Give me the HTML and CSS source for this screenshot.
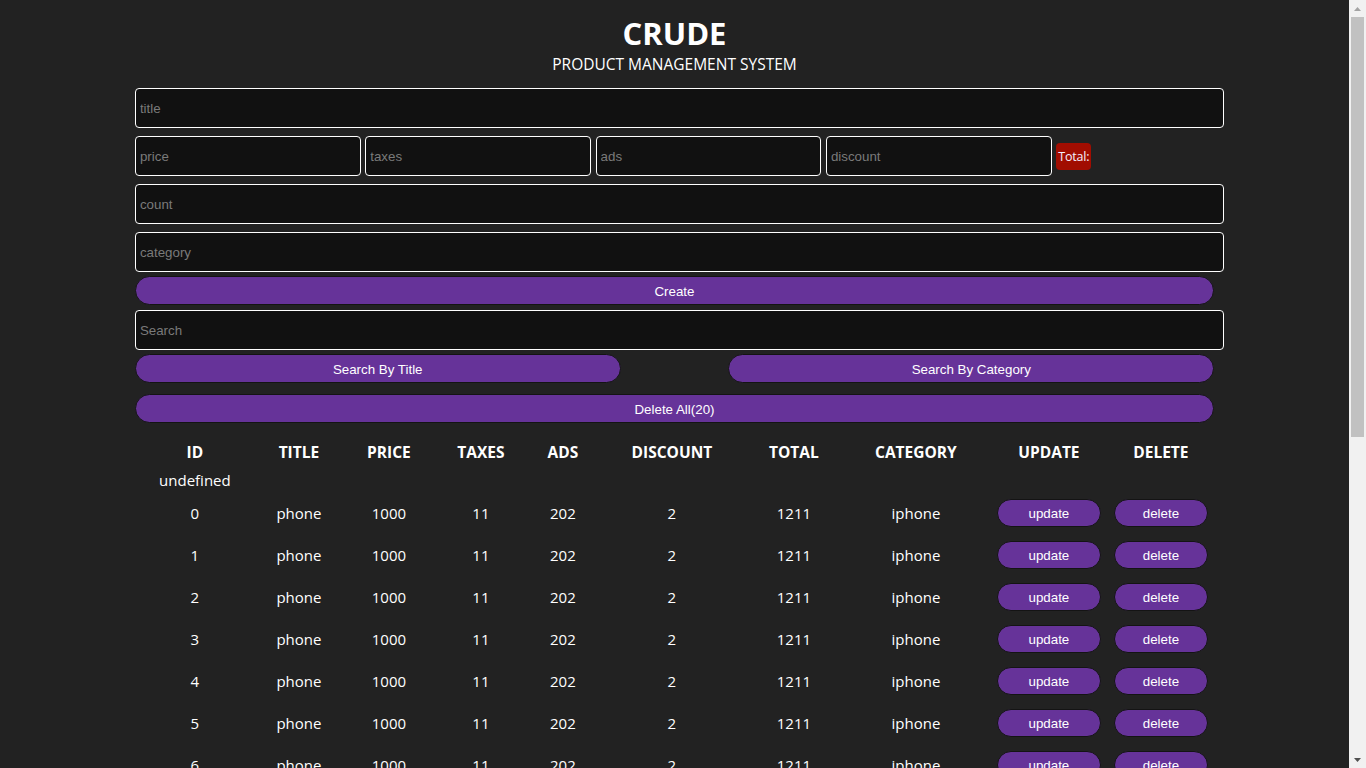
FILE: index.html
```html
<!DOCTYPE html>
<html lang="en">
<head>
<meta charset="utf-8">
<title>CRUDE</title>
<link rel="stylesheet" href="styles.css">
</head>
<body>
<div class="crud">
  <div class="head">
    <h1>CRUDE</h1>
    <p>PRODUCT MANAGEMENT SYSTEM</p>
  </div>
  <input class="field" type="text" placeholder="title">
  <div class="price">
    <input class="small" type="number" placeholder="price">
    <input class="small" type="number" placeholder="taxes">
    <input class="small" type="number" placeholder="ads">
    <input class="small" type="number" placeholder="discount">
    <small class="total">Total:</small>
  </div>
  <input class="field" type="number" placeholder="count">
  <input class="field" type="text" placeholder="category">
  <button class="btn btn-create">Create</button>
  <input class="field field-search" type="text" placeholder="Search">
  <div class="search-btns">
    <button class="btn">Search By Title</button>
    <button class="btn">Search By Category</button>
  </div>
  <button class="btn btn-delete-all">Delete All(20)</button>
  <table class="products">
    <thead>
      <tr>
        <th class="c-id">ID</th>
        <th class="c-title">TITLE</th>
        <th class="c-price">PRICE</th>
        <th class="c-taxes">TAXES</th>
        <th class="c-ads">ADS</th>
        <th class="c-discount">DISCOUNT</th>
        <th class="c-total">TOTAL</th>
        <th class="c-category">CATEGORY</th>
        <th class="c-update">UPDATE</th>
        <th class="c-delete">DELETE</th>
      </tr>
    </thead>
    <tbody>
      <tr class="undef"><td>undefined</td></tr>
      <tr><td>0</td><td>phone</td><td>1000</td><td>11</td><td>202</td><td>2</td><td>1211</td><td>iphone</td><td><button class="row-btn upd">update</button></td><td><button class="row-btn del">delete</button></td></tr>
      <tr><td>1</td><td>phone</td><td>1000</td><td>11</td><td>202</td><td>2</td><td>1211</td><td>iphone</td><td><button class="row-btn upd">update</button></td><td><button class="row-btn del">delete</button></td></tr>
      <tr><td>2</td><td>phone</td><td>1000</td><td>11</td><td>202</td><td>2</td><td>1211</td><td>iphone</td><td><button class="row-btn upd">update</button></td><td><button class="row-btn del">delete</button></td></tr>
      <tr><td>3</td><td>phone</td><td>1000</td><td>11</td><td>202</td><td>2</td><td>1211</td><td>iphone</td><td><button class="row-btn upd">update</button></td><td><button class="row-btn del">delete</button></td></tr>
      <tr><td>4</td><td>phone</td><td>1000</td><td>11</td><td>202</td><td>2</td><td>1211</td><td>iphone</td><td><button class="row-btn upd">update</button></td><td><button class="row-btn del">delete</button></td></tr>
      <tr><td>5</td><td>phone</td><td>1000</td><td>11</td><td>202</td><td>2</td><td>1211</td><td>iphone</td><td><button class="row-btn upd">update</button></td><td><button class="row-btn del">delete</button></td></tr>
      <tr><td>6</td><td>phone</td><td>1000</td><td>11</td><td>202</td><td>2</td><td>1211</td><td>iphone</td><td><button class="row-btn upd">update</button></td><td><button class="row-btn del">delete</button></td></tr>
      <tr><td>7</td><td>phone</td><td>1000</td><td>11</td><td>202</td><td>2</td><td>1211</td><td>iphone</td><td><button class="row-btn upd">update</button></td><td><button class="row-btn del">delete</button></td></tr>
      <tr><td>8</td><td>phone</td><td>1000</td><td>11</td><td>202</td><td>2</td><td>1211</td><td>iphone</td><td><button class="row-btn upd">update</button></td><td><button class="row-btn del">delete</button></td></tr>
      <tr><td>9</td><td>phone</td><td>1000</td><td>11</td><td>202</td><td>2</td><td>1211</td><td>iphone</td><td><button class="row-btn upd">update</button></td><td><button class="row-btn del">delete</button></td></tr>
      <tr><td>10</td><td>phone</td><td>1000</td><td>11</td><td>202</td><td>2</td><td>1211</td><td>iphone</td><td><button class="row-btn upd">update</button></td><td><button class="row-btn del">delete</button></td></tr>
      <tr><td>11</td><td>phone</td><td>1000</td><td>11</td><td>202</td><td>2</td><td>1211</td><td>iphone</td><td><button class="row-btn upd">update</button></td><td><button class="row-btn del">delete</button></td></tr>
      <tr><td>12</td><td>phone</td><td>1000</td><td>11</td><td>202</td><td>2</td><td>1211</td><td>iphone</td><td><button class="row-btn upd">update</button></td><td><button class="row-btn del">delete</button></td></tr>
      <tr><td>13</td><td>phone</td><td>1000</td><td>11</td><td>202</td><td>2</td><td>1211</td><td>iphone</td><td><button class="row-btn upd">update</button></td><td><button class="row-btn del">delete</button></td></tr>
      <tr><td>14</td><td>phone</td><td>1000</td><td>11</td><td>202</td><td>2</td><td>1211</td><td>iphone</td><td><button class="row-btn upd">update</button></td><td><button class="row-btn del">delete</button></td></tr>
      <tr><td>15</td><td>phone</td><td>1000</td><td>11</td><td>202</td><td>2</td><td>1211</td><td>iphone</td><td><button class="row-btn upd">update</button></td><td><button class="row-btn del">delete</button></td></tr>
      <tr><td>16</td><td>phone</td><td>1000</td><td>11</td><td>202</td><td>2</td><td>1211</td><td>iphone</td><td><button class="row-btn upd">update</button></td><td><button class="row-btn del">delete</button></td></tr>
      <tr><td>17</td><td>phone</td><td>1000</td><td>11</td><td>202</td><td>2</td><td>1211</td><td>iphone</td><td><button class="row-btn upd">update</button></td><td><button class="row-btn del">delete</button></td></tr>
      <tr><td>18</td><td>phone</td><td>1000</td><td>11</td><td>202</td><td>2</td><td>1211</td><td>iphone</td><td><button class="row-btn upd">update</button></td><td><button class="row-btn del">delete</button></td></tr>
      <tr><td>19</td><td>phone</td><td>1000</td><td>11</td><td>202</td><td>2</td><td>1211</td><td>iphone</td><td><button class="row-btn upd">update</button></td><td><button class="row-btn del">delete</button></td></tr>
    </tbody>
  </table>
</div>
<div class="scrollbar" aria-hidden="true">
  <div class="sb-arrow">
    <svg width="7" height="4" viewBox="0 0 7 4"><path d="M0 4 L3.5 0 L7 4 Z" fill="#a3a3a3"/></svg>
  </div>
  <div class="sb-track"><div class="sb-thumb"></div></div>
  <div class="sb-arrow">
    <svg width="7" height="4" viewBox="0 0 7 4"><path d="M0 0 L7 0 L3.5 4 Z" fill="#505050"/></svg>
  </div>
</div>
</body>
</html>
```
FILE: styles.css
```css
html::-webkit-scrollbar {
  display: none;
}

body {
  margin: 0 17px 0 0;
  background: #222222;
  color: #ffffff;
  font-family: "Open Sans", "Noto Sans", sans-serif;
}

/* imitation of the browser's vertical scrollbar */
.scrollbar {
  position: fixed;
  top: 0;
  right: 0;
  width: 17px;
  height: 100vh;
  background: #f1f1f1;
  display: flex;
  flex-direction: column;
}
.sb-arrow {
  height: 17px;
  flex: none;
  display: flex;
  align-items: center;
  justify-content: center;
}
.sb-track {
  flex: 1;
  padding: 0 2px;
}
.sb-thumb {
  height: 420px;
  background: #c1c1c1;
}

.crud {
  width: 80%;
  margin: 0 auto;
  display: flex;
  flex-direction: column;
  align-items: flex-start;
}

.head {
  align-self: stretch;
  text-align: center;
  padding: 13px 0 10px;
}
.head h1 {
  margin: 0;
  font-size: 31px;
  font-weight: 700;
  line-height: 40px;
}
.head p {
  margin: 1px 0 0;
  font-size: 15.5px;
  line-height: 20px;
}

input {
  box-sizing: content-box;
  height: 30px;
  padding: 4px;
  border: 1px solid #ffffff;
  border-radius: 4px;
  background: #111111;
  color: #ffffff;
  font-family: "Liberation Sans", Arial, sans-serif;
  font-size: 13.333px;
  outline: none;
}
input::placeholder {
  color: #7a7a7a;
}
input::-webkit-outer-spin-button,
input::-webkit-inner-spin-button {
  -webkit-appearance: none;
  margin: 0;
}

.field {
  width: 100%;
  margin: 4px 0;
}

.price {
  align-self: stretch;
  display: flex;
  align-items: center;
  gap: 4.5px;
  margin: 4px 0;
}
.price .small {
  width: 20%;
  flex: none;
  margin: 0;
}
.total {
  background: #a10d01;
  color: #f4f0ff;
  border-radius: 4px;
  padding: 4px 2px;
  font-size: 12.5px;
  letter-spacing: -0.2px;
  line-height: 19px;
  font-family: "Open Sans", "Noto Sans", sans-serif;
}

.btn {
  box-sizing: border-box;
  width: 100%;
  height: 29px;
  padding: 7px 6px 5px;
  line-height: 15px;
  border: 1px solid #141414;
  border-radius: 20px;
  background: #663399;
  color: #ffffff;
  font-family: "Liberation Sans", Arial, sans-serif;
  font-size: 13.333px;
  cursor: pointer;
}
.btn-create {
  margin: 0 0 1px;
}
.field-search {
  margin: 4px 0 4px;
}
.search-btns {
  align-self: stretch;
  display: flex;
  justify-content: space-between;
}
.search-btns .btn {
  width: 45%;
}
.btn-delete-all {
  margin-top: 11px;
}

.products {
  width: 100%;
  margin-top: 12px;
  table-layout: fixed;
  border-spacing: 2px;
  text-align: center;
  font-size: 15px;
}
.products th {
  padding: 4px 1px;
  line-height: 23px;
  font-size: 15.5px;
  font-weight: 700;
}
.products td {
  padding: 6px 1px;
  line-height: 21px;
  vertical-align: middle;
}
.products .undef td {
  padding: 0 1px;
}
.c-id { width: 114px; }
.c-title { width: 86px; }
.c-price { width: 86px; }
.c-taxes { width: 90px; }
.c-ads { width: 66px; }
.c-discount { width: 144px; }
.c-total { width: 92px; }
.c-category { width: 144px; }
.c-update { width: 114px; }
.c-delete { width: 102px; }

.row-btn {
  box-sizing: border-box;
  height: 28px;
  padding: 2px 0 0;
  line-height: 16px;
  border: 1px solid #141414;
  border-radius: 20px;
  background: #663399;
  color: #ffffff;
  font-family: "Liberation Sans", Arial, sans-serif;
  font-size: 13.333px;
  cursor: pointer;
}
.row-btn.upd { width: 104px; }
.row-btn.del { width: 94px; }
```
